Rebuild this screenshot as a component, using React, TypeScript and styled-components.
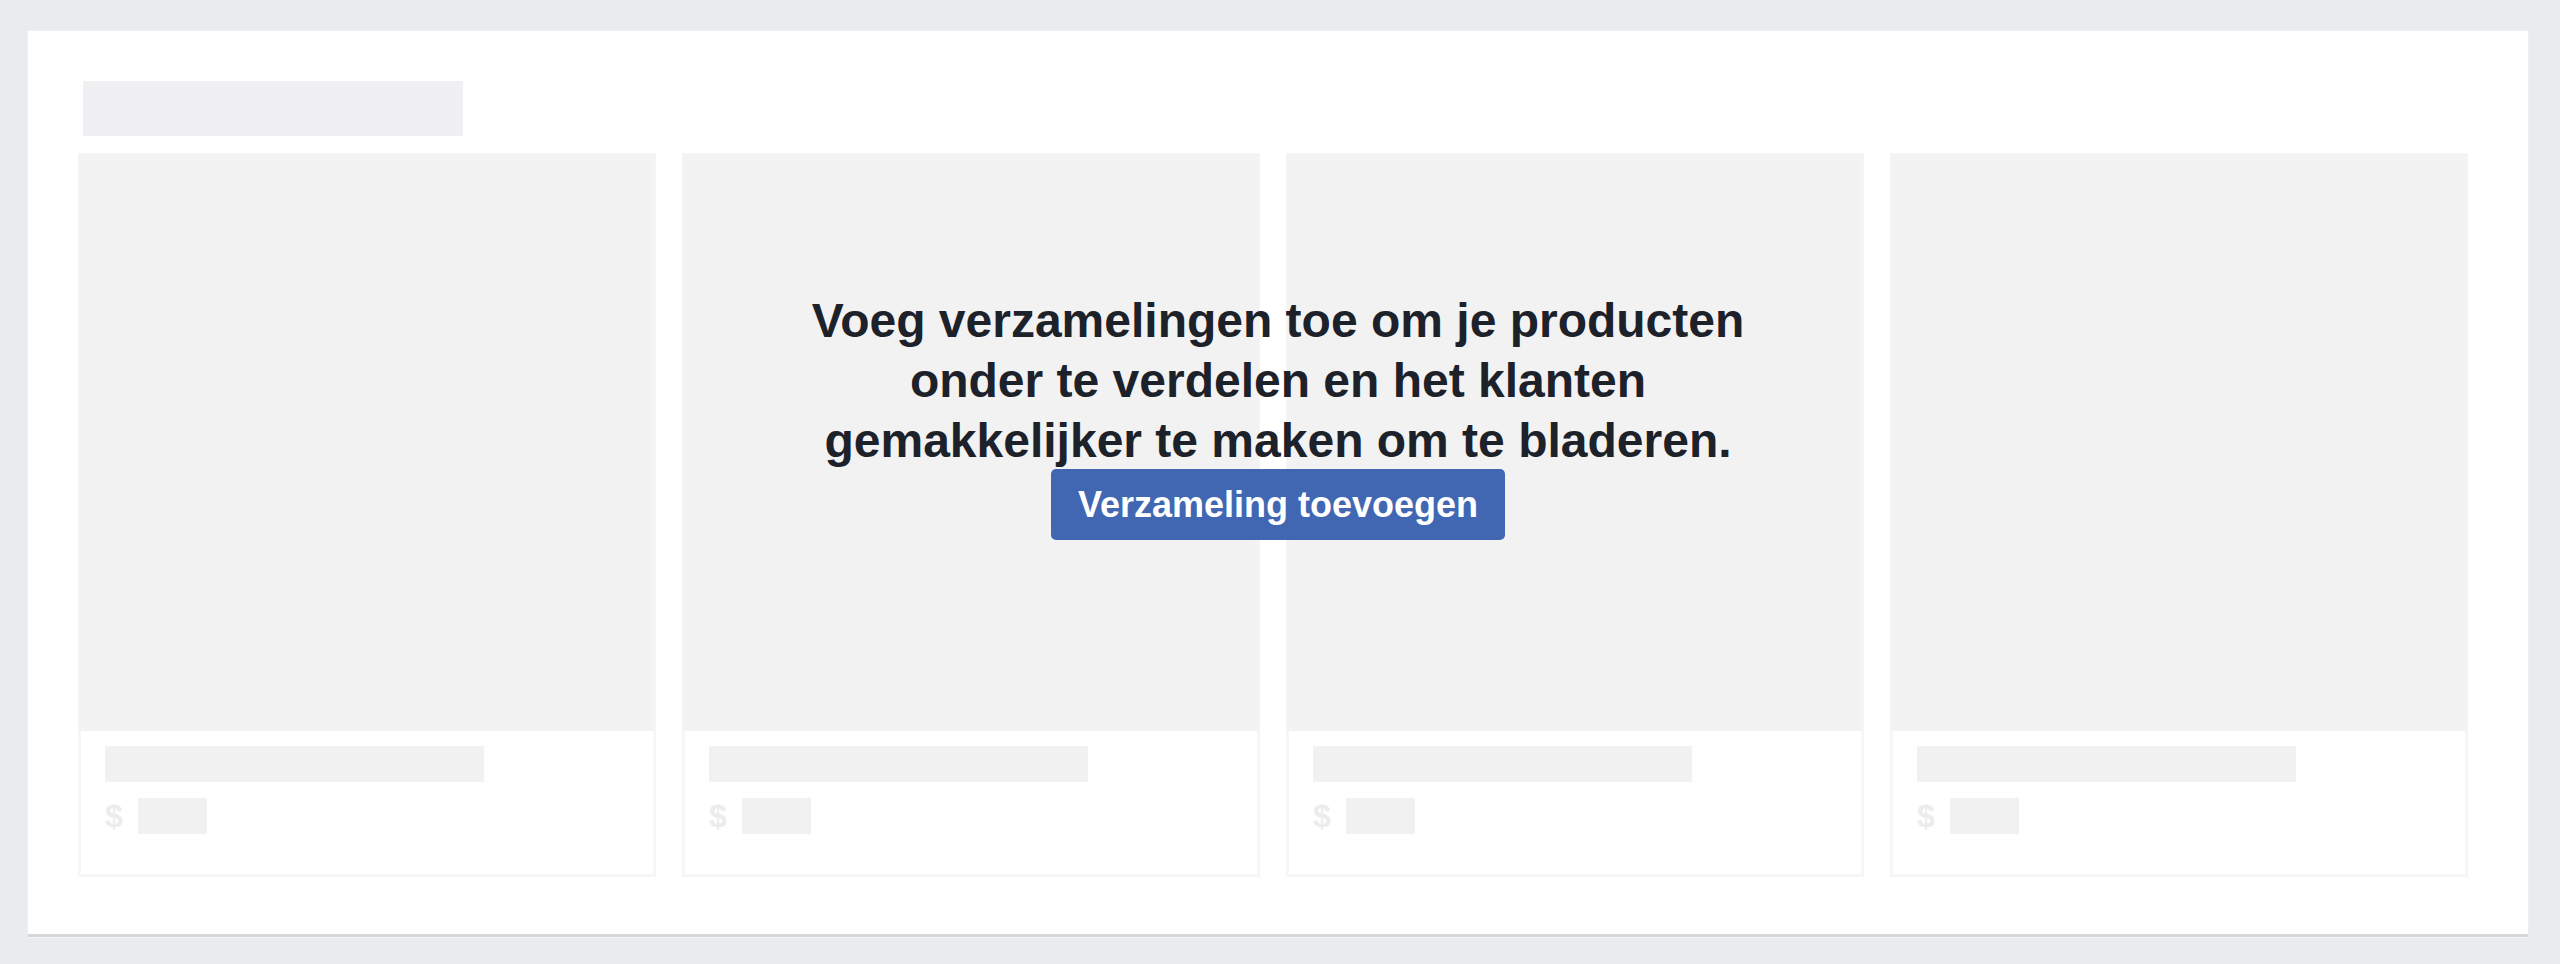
import React from "react";
import styled, { createGlobalStyle } from "styled-components";

const Global = createGlobalStyle`
  html, body {
    margin: 0;
    padding: 0;
    background: #e9ebee;
    font-family: "Liberation Sans", Arial, sans-serif;
  }
  * { box-sizing: border-box; }
`;

const Page = styled.div`
  width: 2560px;
  height: 964px;
  padding: 30px 31px 27px 27px;
`;

const Card = styled.section`
  position: relative;
  height: 907px;
  background: #ffffff;
  border: 1px solid #eeeff1;
  border-bottom: 3px solid #d6d8dc;
  box-shadow: 0 1px 0 #f4f5f6;
  padding: 50px 60px 0 50px;
  display: flex;
  flex-direction: column;
  gap: 17px;
`;

const TitleBar = styled.div`
  width: 380px;
  height: 55px;
  margin-left: 5px;
  background: #f0f0f2;
`;

const Grid = styled.div`
  display: grid;
  grid-template-columns: repeat(4, 578px);
  column-gap: 26px;
`;

const Tile = styled.div`
  height: 724px;
  display: flex;
  flex-direction: column;
  border: 1px solid #f5f5f5;
`;

const ImageArea = styled.div`
  height: 577px;
  background: #f2f2f2;
  box-shadow: inset 0 0 0 6px #f3f3f3;
`;

const Footer = styled.div`
  flex: 1;
  background: #ffffff;
  border: 2px solid #f7f7f7;
  border-top: none;
  padding: 15px 0 0 24px;
  display: flex;
  flex-direction: column;
  gap: 16px;
`;

const NameBar = styled.div`
  width: 379px;
  height: 36px;
  background: #f1f1f2;
`;

const PriceRow = styled.div`
  display: flex;
  align-items: center;
  gap: 15px;
`;

const Dollar = styled.span`
  font-size: 32px;
  font-weight: 700;
  color: #ececec;
  line-height: 36px;
`;

const PriceBar = styled.div`
  width: 69px;
  height: 36px;
  background: #f1f1f2;
`;

const Overlay = styled.div`
  position: absolute;
  top: 260px;
  left: 0;
  right: 0;
  display: flex;
  flex-direction: column;
  align-items: center;
`;

const Message = styled.p`
  margin: 0;
  font-family: "Liberation Sans", Arial, sans-serif;
  font-size: 48px;
  font-weight: 700;
  line-height: 60px;
  color: #1d2129;
  text-align: center;
`;

const AddButton = styled.button`
  margin-top: -2px;
  height: 71px;
  padding: 0 27px;
  border: none;
  border-radius: 5px;
  background: #4267b2;
  color: #ffffff;
  font-family: "Liberation Sans", Arial, sans-serif;
  font-size: 36px;
  font-weight: 700;
  cursor: pointer;
`;

const tiles = [0, 1, 2, 3];

export default function App() {
  return (
    <>
      <Global />
      <Page>
        <Card>
          <TitleBar />
          <Grid>
            {tiles.map((t) => (
              <Tile key={t}>
                <ImageArea />
                <Footer>
                  <NameBar />
                  <PriceRow>
                    <Dollar>$</Dollar>
                    <PriceBar />
                  </PriceRow>
                </Footer>
              </Tile>
            ))}
          </Grid>
          <Overlay>
            <Message>
              Voeg verzamelingen toe om je producten
              <br />
              onder te verdelen en het klanten
              <br />
              gemakkelijker te maken om te bladeren.
            </Message>
            <AddButton>Verzameling toevoegen</AddButton>
          </Overlay>
        </Card>
      </Page>
    </>
  );
}
